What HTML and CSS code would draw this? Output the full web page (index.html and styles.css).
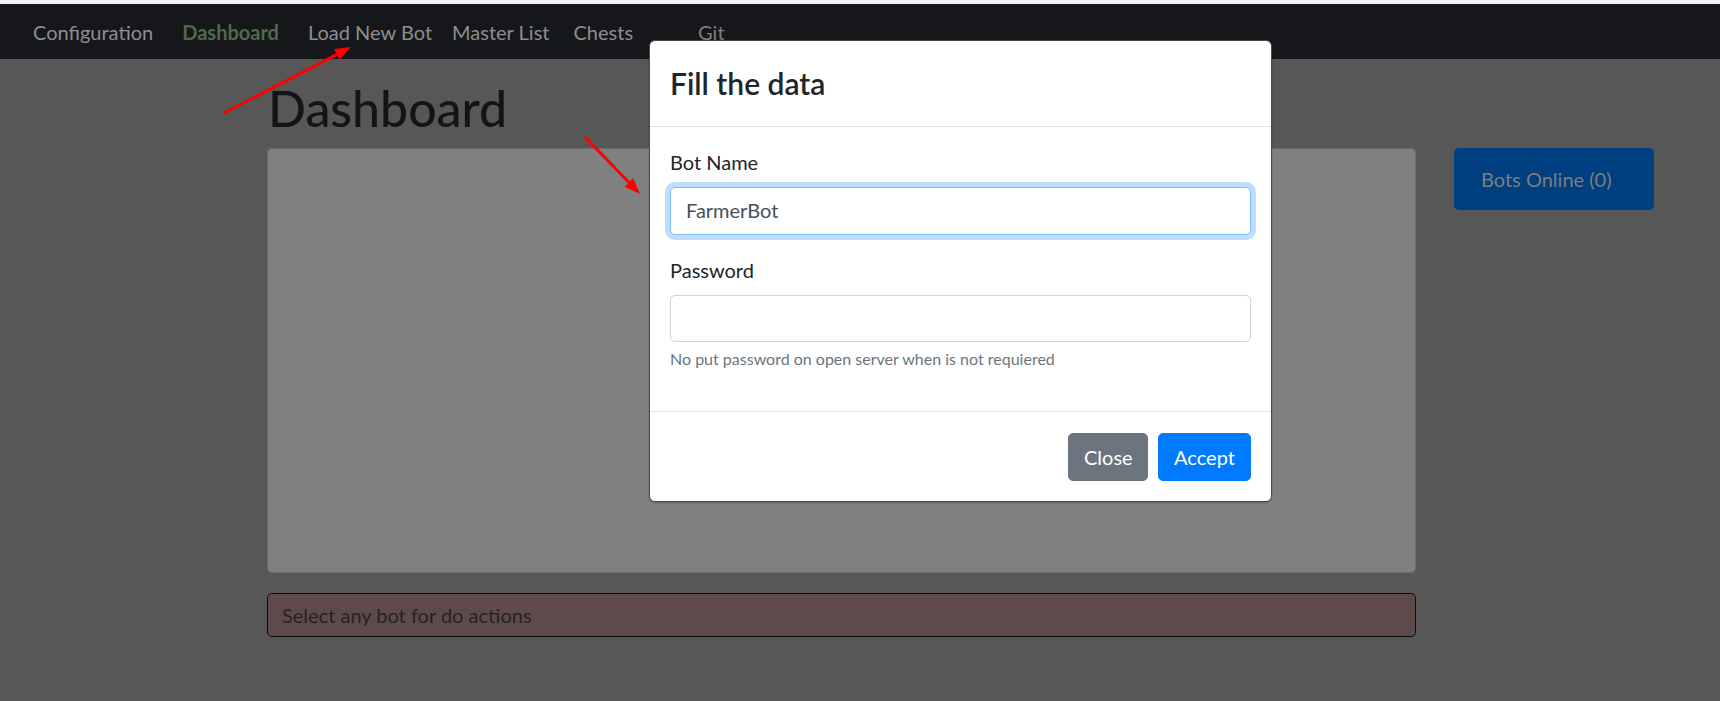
FILE: index.html
```html
<!DOCTYPE html>
<html lang="en">
<head>
<meta charset="utf-8">
<title>Dashboard</title>
<link rel="stylesheet" href="styles.css">
</head>
<body>
<div class="top-strip"></div>
<nav class="navbar">
  <a class="nav-link">Configuration</a>
  <a class="nav-link active">Dashboard</a>
  <a class="nav-link load">Load New Bot</a>
  <a class="nav-link master">Master List</a>
  <a class="nav-link chests">Chests</a>
  <a class="nav-link git">Git</a>
</nav>
<main class="page">
  <h1 class="page-title">Dashboard</h1>
  <div class="card"></div>
  <div class="side">
    <div class="bots-btn">Bots Online (0)</div>
  </div>
  <div class="alert">Select any bot for do actions</div>
</main>

<div class="modal">
  <div class="modal-header">
    <h4 class="modal-title">Fill the data</h4>
  </div>
  <div class="modal-body">
    <div class="form-group">
      <label class="form-label">Bot Name</label>
      <div class="form-control focused">FarmerBot</div>
    </div>
    <div class="form-group">
      <label class="form-label">Password</label>
      <div class="form-control"></div>
      <small class="form-text">No put password on open server when is not requiered</small>
    </div>
  </div>
  <div class="modal-footer">
    <button class="btn btn-secondary">Close</button>
    <button class="btn btn-primary">Accept</button>
  </div>
</div>

<svg class="annotations" width="1720" height="701" viewBox="0 0 1720 701">
  <line x1="224" y1="113" x2="337" y2="54.4" stroke="#ff0000" stroke-width="3"/>
  <polygon points="351,47 339.6,59.7 334,49.1" fill="#ff0000"/>
  <line x1="585" y1="137" x2="629" y2="182.5" stroke="#ff0000" stroke-width="3"/>
  <polygon points="640,194 624.6,186.7 633.2,178.3" fill="#ff0000"/>
</svg>
</body>
</html>
```

FILE: styles.css
```css
* {
  box-sizing: border-box;
}

html, body {
  margin: 0;
  padding: 0;
}

body {
  width: 1720px;
  height: 701px;
  overflow: hidden;
  background: #575757;
  font-family: "Segoe UI", Lato, "Noto Sans", sans-serif;
  font-size: 20px;
  line-height: 1.5;
  color: #212529;
  position: relative;
}

.top-strip {
  height: 4px;
  background: #f2f2f2;
}

.navbar {
  height: 55px;
  background: #16171b;
  display: flex;
  align-items: center;
  padding-left: 33px;
}

.nav-link {
  color: #8d8e90;
  font-size: 20px;
  line-height: 30px;
  text-decoration: none;
  margin-left: 29px;
}

.nav-link:first-child {
  margin-left: 0;
}

.nav-link.active {
  color: #4e6a4d;
  font-weight: 700;
}

.nav-link.load {
  margin-left: 29px;
}

.nav-link.master {
  margin-left: 20px;
}

.nav-link.chests {
  margin-left: 24px;
}

.nav-link.git {
  margin-left: 65px;
  color: #7e7f81;
}

.page {
  display: grid;
  grid-template-columns: 1149px 200px;
  column-gap: 38px;
  align-items: start;
  padding: 19px 0 0 267px;
}

.page-title {
  grid-column: 1;
  margin: 0 0 10px 1px;
  font-size: 50px;
  line-height: 60px;
  font-weight: 500;
  color: #131416;
}

.card {
  grid-column: 1;
  grid-row: 2;
  height: 425px;
  background: #808080;
  border: 1px solid #6c6c6c;
  border-radius: 5px;
}

.side {
  grid-column: 2;
  grid-row: 2;
}

.bots-btn {
  height: 62px;
  padding: 16px 0 16px 27px;
  background: #003f80;
  border-radius: 5px;
  color: #7d7d7d;
  font-size: 20px;
  line-height: 30px;
}

.alert {
  grid-column: 1;
  grid-row: 3;
  margin-top: 20px;
  height: 44px;
  padding: 6px 14px;
  background: #5e4a4a;
  border: 1px solid #0c0c0c;
  border-radius: 5px;
  color: #272223;
  font-size: 20px;
  line-height: 30px;
}

.modal {
  position: absolute;
  left: 649px;
  top: 40px;
  width: 623px;
  background: #ffffff;
  border: 1px solid #4a4a4a;
  border-radius: 6px;
  box-shadow: 0 1px 2px rgba(0, 0, 0, 0.25);
}

.modal-header {
  padding: 20px;
  border-bottom: 1px solid #dee2e6;
}

.modal-title {
  margin: 0;
  font-size: 30px;
  line-height: 45px;
  font-weight: 600;
  color: #212529;
}

.modal-body {
  padding: 20px;
}

.form-group {
  margin-bottom: 20px;
}

.form-label {
  display: block;
  margin-bottom: 10px;
  font-size: 20px;
  line-height: 30px;
  color: #212529;
}

.form-control {
  height: 47.5px;
  padding: 7px 15px;
  border: 1px solid #ced4da;
  border-radius: 5px;
  font-size: 20px;
  line-height: 30px;
  color: #495057;
  background: #fff;
}

.form-control.focused {
  border-color: #80bdff;
  box-shadow: 0 0 0 5px rgba(0, 123, 255, 0.25);
}

.form-text {
  display: block;
  margin-top: 5px;
  font-size: 16px;
  line-height: 24px;
  color: #6c757d;
}

.modal-footer {
  display: flex;
  justify-content: flex-end;
  gap: 10px;
  padding: 21px 20px 20px;
  border-top: 1px solid #dee2e6;
}

.btn {
  height: 47.5px;
  padding: 0 15px;
  border: 1px solid transparent;
  border-radius: 5px;
  font-family: inherit;
  font-size: 20px;
  line-height: 30px;
  color: #ffffff;
}

.btn-secondary {
  width: 80px;
  background: #6c757d;
  border-color: #6c757d;
}

.btn-primary {
  width: 93px;
  background: #007bff;
  border-color: #007bff;
}

.annotations {
  position: absolute;
  left: 0;
  top: 0;
  pointer-events: none;
}
```
